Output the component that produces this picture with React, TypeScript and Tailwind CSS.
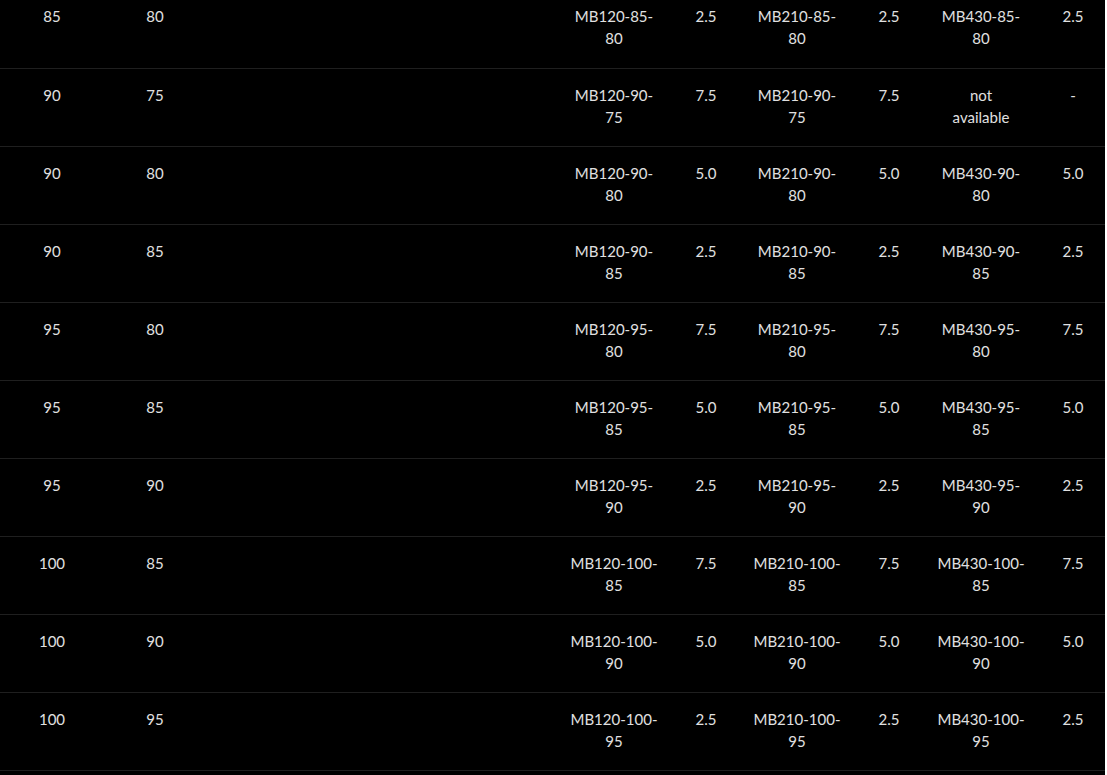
import React from 'react'

type Row = {
    a: string
    b: string
    m120: string
    v120: string
    m210: string
    v210: string
    m430: string
    v430: string
}

const rows: Row[] = [
    { a: "85", b: "80", m120: "MB120-85-80", v120: "2.5", m210: "MB210-85-80", v210: "2.5", m430: "MB430-85-80", v430: "2.5" },
    { a: "90", b: "75", m120: "MB120-90-75", v120: "7.5", m210: "MB210-90-75", v210: "7.5", m430: "not available", v430: "-" },
    { a: "90", b: "80", m120: "MB120-90-80", v120: "5.0", m210: "MB210-90-80", v210: "5.0", m430: "MB430-90-80", v430: "5.0" },
    { a: "90", b: "85", m120: "MB120-90-85", v120: "2.5", m210: "MB210-90-85", v210: "2.5", m430: "MB430-90-85", v430: "2.5" },
    { a: "95", b: "80", m120: "MB120-95-80", v120: "7.5", m210: "MB210-95-80", v210: "7.5", m430: "MB430-95-80", v430: "7.5" },
    { a: "95", b: "85", m120: "MB120-95-85", v120: "5.0", m210: "MB210-95-85", v210: "5.0", m430: "MB430-95-85", v430: "5.0" },
    { a: "95", b: "90", m120: "MB120-95-90", v120: "2.5", m210: "MB210-95-90", v210: "2.5", m430: "MB430-95-90", v430: "2.5" },
    { a: "100", b: "85", m120: "MB120-100-85", v120: "7.5", m210: "MB210-100-85", v210: "7.5", m430: "MB430-100-85", v430: "7.5" },
    { a: "100", b: "90", m120: "MB120-100-90", v120: "5.0", m210: "MB210-100-90", v210: "5.0", m430: "MB430-100-90", v430: "5.0" },
    { a: "100", b: "95", m120: "MB120-100-95", v120: "2.5", m210: "MB210-100-95", v210: "2.5", m430: "MB430-100-95", v430: "2.5" },
]

const cell = "align-top text-center pt-[15px] pb-[18px]"
// model cells wrap after the last hyphen, so keep the content box narrow
const model = "align-top text-center px-[15px] pt-[15px] pb-[18px]"

const Model = ({ text }: { text: string }) =>
    text === "not available"
        ? <span className="inline-block max-w-[70px]">{text}</span>
        : <>{text}</>

const App = () => {
    return <div className="min-h-screen bg-white">
        <div className="w-[1105px] min-h-[775px] bg-black overflow-hidden">
            <table className="table-fixed w-full border-collapse -mt-[10px] text-[15px] leading-[22px] text-[#e0e0e0] font-['Lato','Liberation_Sans',sans-serif]">
                <colgroup>
                    <col className="w-[104px]" />
                    <col className="w-[102px]" />
                    <col />
                    <col className="w-[122px]" />
                    <col className="w-[62px]" />
                    <col className="w-[120px]" />
                    <col className="w-[64px]" />
                    <col className="w-[120px]" />
                    <col className="w-[64px]" />
                </colgroup>
                <tbody>
                    {rows.map((r, i) => <tr key={i} className="h-[78px] border-b border-[#1f1f1f]">
                        <td className={cell}>{r.a}</td>
                        <td className={cell}>{r.b}</td>
                        <td className={cell}></td>
                        <td className={model}><Model text={r.m120} /></td>
                        <td className={cell}>{r.v120}</td>
                        <td className={model}><Model text={r.m210} /></td>
                        <td className={cell}>{r.v210}</td>
                        <td className={model}><Model text={r.m430} /></td>
                        <td className={cell}>{r.v430}</td>
                    </tr>)}
                </tbody>
            </table>
        </div>
    </div>
}

export default App
